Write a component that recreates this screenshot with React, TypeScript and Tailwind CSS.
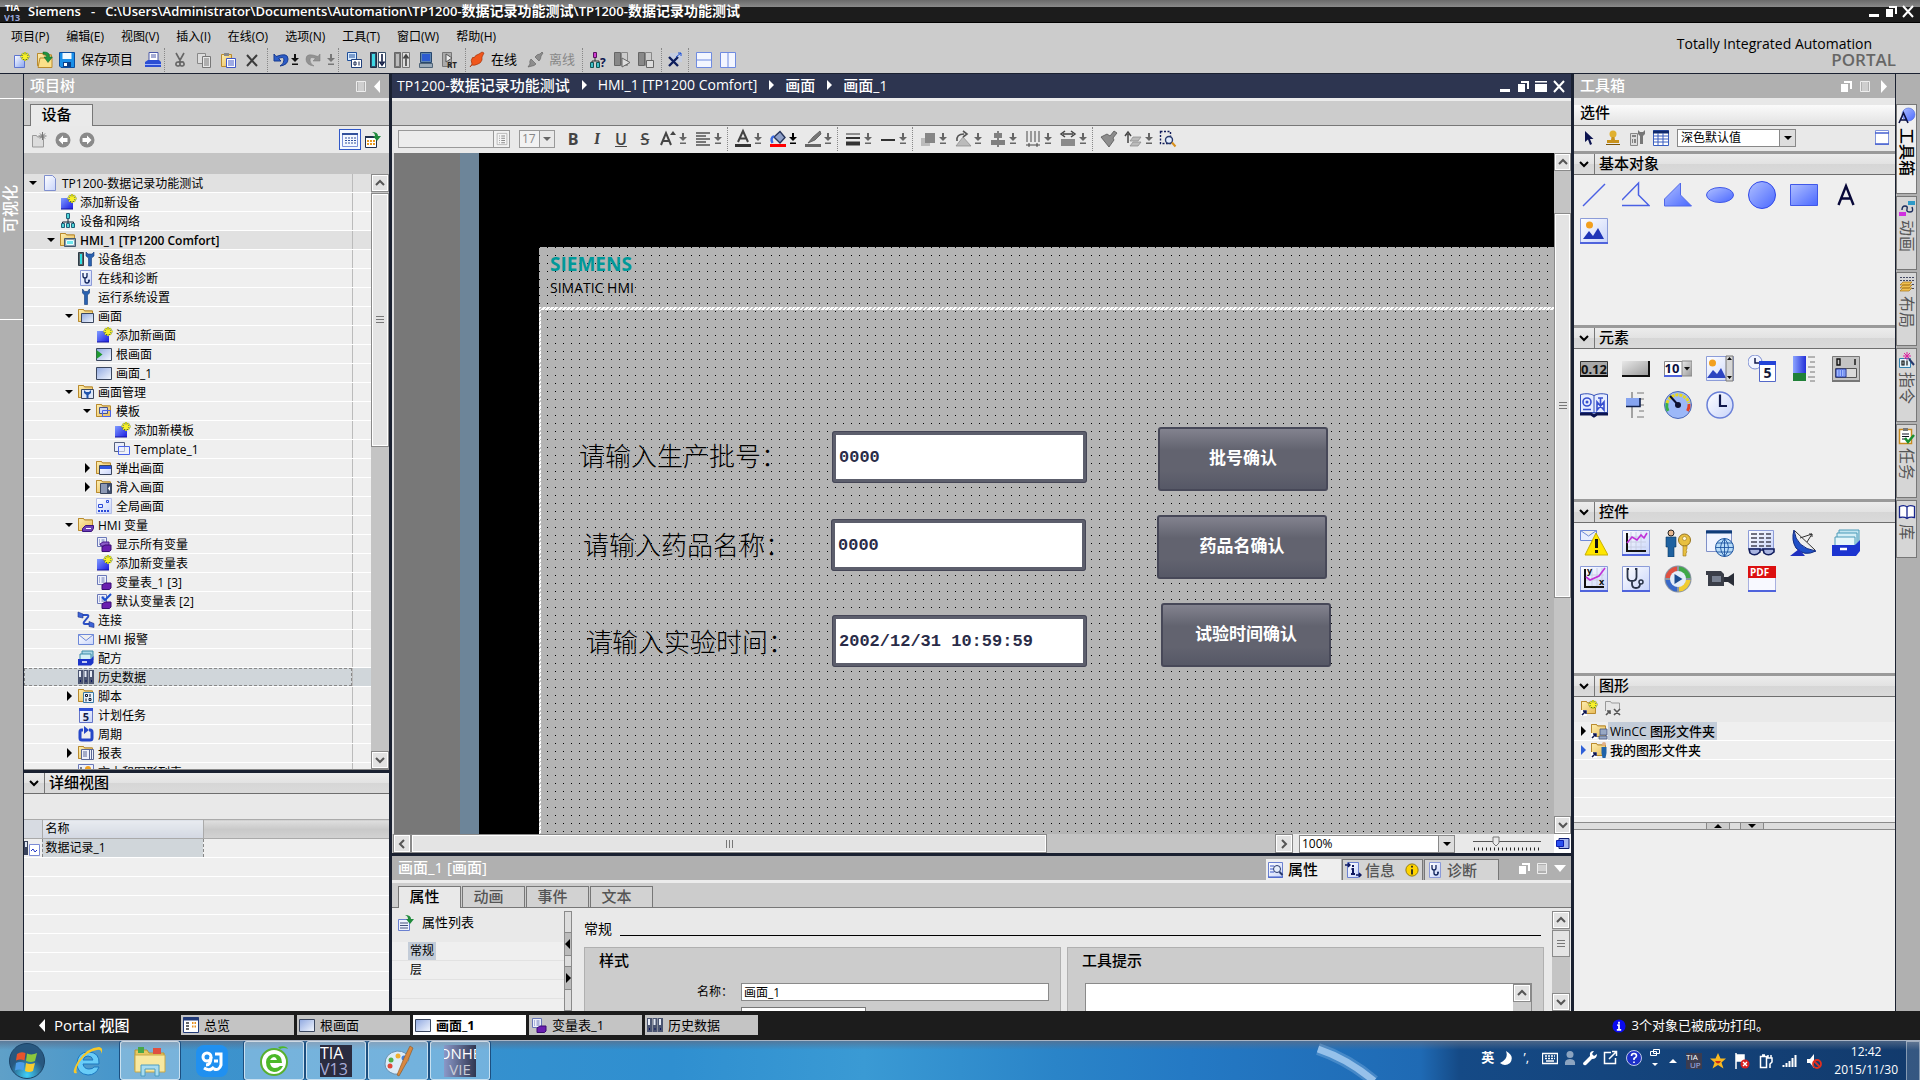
import type { ReactNode } from "react";

const folder = (
  <>
    <path d="M.5 13.500V1.500h5l1 1.500h8v4" fill="url(#gold)" stroke="#b98a2e" />
    <path d="M.5 1.500h5l1 1.500h8v10.500H.5z" fill="url(#gold)" stroke="#b98a2e" />
  </>
);

const star = (
  <>
    <path d="M12 0v9M7.500 4.500h9M9 1.500l6 6M15 1.500l-6 6" stroke="#4a6a20" strokeWidth="2.200" />
    <path d="M12 0v9M7.500 4.500h9M9 1.500l6 6M15 1.500l-6 6" stroke="#f8f02a" strokeWidth="1.400" />
  </>
);

const sheet = <path d="M1.500 1.500h9v9h-9zM3 4h1m1.500 0h3M3 6h1m1.500 0h3M3 8h1m1.500 0h3" fill="#eef1fb" stroke="#6a78b8" />;

const tag = <path d="M6 11l3-2h6v5l-1.500 1.500H6z" fill="#6a1fb0" stroke="#3b0d73" />;

const art: Record<string, ReactNode> = {
  page: <path d="M2.500.5h8l3 3v12h-11z" fill="url(#pale)" stroke="#7f8fce" />,
  add: (
    <>
      <path d="M1 4h12v11H1z" fill="url(#blue)" />
      <path d="M1 15h12" stroke="#1414a0" />
      {star}
    </>
  ),
  net: (
    <>
      <path d="M8 5v4M2.500 11V9h11v2M8 9v2" fill="none" stroke="#123" />
      <path d="M6.500.5h3v5h-3zM1.500 10.500h3v4h-3zM6.500 10.500h3v4h-3zM11.500 10.500h3v4h-3z" fill="#4fd5d8" stroke="#20607a" />
    </>
  ),
  folderHmi: (
    <>
      {folder}
      <path d="M4.500 6.500h11v8h-11z" fill="#8b9bab" stroke="#445a70" />
      <path d="M6.500 8.500h7v4h-7z" fill="#6ee6ee" stroke="#e8ffff" />
    </>
  ),
  devconf: (
    <>
      <path d="M.5 1.500h5v13h-5z" fill="#57636b" stroke="#2d3a44" />
      <path d="M2 3h2v10H2z" fill="#2ee0e0" />
      <path d="M8 1v4l2.500 2v8h3V7L16 5V1l-2 2h-4z" fill="#2a62b0" stroke="#143a78" strokeWidth=".6" />
    </>
  ),
  diag: (
    <>
      <path d="M2.500.5h11v15h-11z" fill="url(#pale)" stroke="#8b9ad8" />
      <path d="M5 3v3q0 2 2 2t2-2V3M7 8v3q0 2 2 2t2-2" fill="none" stroke="#11245c" strokeWidth="1.300" />
      <circle cx="11" cy="10.500" r="1" fill="#11245c" />
    </>
  ),
  wrench: <path d="M4.500 0v4l2 2v9.500h3V6l2-2V0l-2 2.500h-3z" fill="#2a62b0" stroke="#143a78" strokeWidth=".6" />,
  folderScreen: (
    <>
      {folder}
      <path d="M3.500 5.500h12v9h-12z" fill="url(#screen)" stroke="#3a465e" />
    </>
  ),
  rootScreen: (
    <>
      <path d="M.5 2.500h15v12H.5z" fill="url(#screen)" stroke="#3a465e" />
      <path d="M.5 4l6 4.500-6 4.500z" fill="#1f9a2f" />
    </>
  ),
  screen: <path d="M.5 2.500h15v12H.5z" fill="url(#screen)" stroke="#3a465e" />,
  folderWrench: (
    <>
      {folder}
      <path d="M3.500 5.500h12v9h-12z" fill="#dde6f7" stroke="#3a465e" />
      <path d="M6 6v3l2.500 2v3.500h2V11L13 9V6l-2 2H8z" fill="#2055ac" />
    </>
  ),
  folderTpl: (
    <>
      {folder}
      <path d="M3.500 4.500h8v6h-8z" fill="#cfd6f2" stroke="#47528a" />
      <path d="M6.500 7.500h8v6h-8z" fill="none" stroke="#4a63e8" />
    </>
  ),
  template: (
    <>
      <path d="M.5 1.500h10v9H.5z" fill="#e8ecfa" stroke="#56607e" />
      <path d="M4.500 5.500h11v8h-11z" fill="#eef2ff" fillOpacity=".6" stroke="#4a63e8" />
    </>
  ),
  folderPopup: (
    <>
      {folder}
      <path d="M3.500 5.500h12v9h-12z" fill="url(#pale)" stroke="#3a465e" />
      <path d="M4 6h11v3H4z" fill="#2f55e0" />
    </>
  ),
  folderSlide: (
    <>
      {folder}
      <path d="M4.500 4.500h11v10h-11z" fill="#8c99b5" stroke="#3a465e" />
      <path d="M11 5h4v9h-4z" fill="#3f4f6e" />
      <path d="M14 7v5l-2-2.500z" fill="#fff" />
    </>
  ),
  global: (
    <>
      <path d="M.5.5h15v15H.5z" fill="url(#pale)" stroke="#b5bfe8" />
      <path d="M2.500 6.500h4v3h-4zM10.500 2.500h2v2h-2z" fill="none" stroke="#2a49d8" />
      <path d="M2 13h2m1 0h2m1 0h2m1 0h2" stroke="#2a49d8" strokeWidth="2" />
    </>
  ),
  folderTag: (
    <>
      {folder}
      <path d="M4.500 11.500l3-3h8v3l-2 3h-9z" fill="#6c3fb5" stroke="#3b1480" />
      <path d="M8 11.500h5" stroke="#fff" />
    </>
  ),
  tagsAll: (
    <>
      {sheet}
      <path d="M4 8l3-2h6v4H5z" fill="#8b5cc8" stroke="#4a1a8a" />
      {tag}
    </>
  ),
  tagTable: (
    <>
      {sheet}
      {tag}
    </>
  ),
  tagDefault: (
    <>
      {sheet}
      {tag}
      <path d="M6 4l3 3 6-6" fill="none" stroke="#1c4fd0" strokeWidth="2" />
    </>
  ),
  link: (
    <>
      <path d="M4 3h5q2 0 1 2L6 10q-1 2 1 2h5" fill="none" stroke="#2b4fc4" strokeWidth="2" />
      <path d="M0 0l5 2v4L0 5zM16 15.500l-5-1v-5l5 2z" fill="#3c63d6" stroke="#1b2f8c" strokeWidth=".6" />
    </>
  ),
  mail: <path d="M.5 3.500h15v10H.5zL8 9.500l7.500-6" fill="url(#pale)" stroke="#6d88d8" />,
  recipe: (
    <>
      <path d="M4 1h11v9H4z" fill="#a9d8e8" stroke="#3d8ba8" />
      <path d="M2 4h11v7H2z" fill="#d5f0f6" stroke="#3d8ba8" />
      <path d="M0 9h13l2.500-3v7L13 15.500H0z" fill="#1c34c8" />
      <path d="M4 12h5" stroke="#fff" strokeWidth="1.500" />
    </>
  ),
  archive: (
    <>
      <path d="M0 1h5v14H0zM5.500 1h5v14h-5zM11 1h5v14h-5z" fill="#4a5470" />
      <path d="M1 2h2v6H1zM6.500 2h2v6h-2zM12 2h2v6h-2z" fill="#e6ebf5" />
      <path d="M2 12h1M7.500 12h1M13 12h1" stroke="#0e1860" strokeWidth="2" />
    </>
  ),
  folderScript: (
    <>
      {folder}
      <path d="M5.500 4.500h10v10h-10z" fill="#e8f2fa" stroke="#3a7aa8" />
      <path d="M7.500 6.500h2v2h-2zM12 6v3M8 10.500v3M11 10.500h2v2h-2z" fill="none" stroke="#101830" />
    </>
  ),
  task: (
    <>
      <path d="M1.500 1.500h13v14h-13z" fill="url(#pale)" stroke="#6474c8" />
      <path d="M1 1h14v3H1z" fill="#2f50d8" />
      <text x="8" y="14" fontSize="11" fontWeight="700" textAnchor="middle" fill="#141c48">5</text>
    </>
  ),
  cycle: (
    <>
      <path d="M5 4H3.500Q2 4 2 6v6q0 2 2 2h8q2 0 2-2V6q0-2-2-2h-1" fill="none" stroke="#2647c8" strokeWidth="3" />
      <path d="M6 0l5 4-5 4z" fill="#2647c8" />
    </>
  ),
  folderReport: (
    <>
      {folder}
      <path d="M3.500 4.500h12v10h-12z" fill="#eef1fb" stroke="#5a6794" />
      <path d="M5 7h4M5 9h4M5 11h4M11.500 5v9M13.500 5v9" stroke="#5a6794" />
    </>
  ),
  textlist: (
    <>
      <path d="M.5.5h15v15H.5z" fill="#eef1fb" stroke="#6a78b8" />
      <path d="M3 3v5" stroke="#111" />
      <circle cx="10" cy="5" r="3" fill="#f0a020" />
    </>
  ),
  datalog: (
    <>
      <path d="M0 1h4v14H0z" fill="#39435c" />
      <path d="M1 2h2v5H1z" fill="#dfe6f2" />
      <path d="M5.500 4.500h10v11h-10z" fill="#fff" stroke="#7b8bd4" />
      <path d="M7 11l2-2 2 3 2-2" fill="none" stroke="#2036c8" />
    </>
  ),
  newProj: (
    <>
      <path d="M1.500 3.500h10v12h-10z" fill="url(#page2)" stroke="#5d74d0" />
      {star}
    </>
  ),
  open: (
    <>
      {folder}
      <path d="M3 6h12v9.500H1z" fill="#fbe08a" stroke="#b98a2e" />
      <path d="M6 0q7-.5 6.500 5H15.500l-4.500 5.500L7 5h2.500q0-3-3.500-3z" fill="#1f9440" stroke="#0e6024" strokeWidth=".5" />
    </>
  ),
  save: (
    <>
      <path d="M.5.5h15v15H2L.5 14z" fill="#1a8fe8" stroke="#0b4ea0" />
      <path d="M3.500 1h9v6h-9z" fill="#f2faff" />
      <path d="M4 10h8v5H4z" fill="#0b3f88" />
      <path d="M5 11h3v3H5z" fill="#fff" />
    </>
  ),
  print: (
    <>
      <path d="M4 .5h9v8H4z" fill="#fff" stroke="#4a58a8" />
      <path d="M6 3h5M6 5h5" stroke="#4a58a8" />
      <path d="M0 10l3-2h11l2 2v5H0z" fill="#2c4fd4" />
      <path d="M0 12.500h16" stroke="#9db4ff" />
    </>
  ),
  cut: (
    <path d="M4 1l5 9M12 1L7 10M6.500 10a2 2 0 1 0-1 4 2 2 0 0 0 1-4M9.500 10a2 2 0 1 1 1 4 2 2 0 0 1-1-4" fill="none" stroke="#666" strokeWidth="1.600" />
  ),
  copy: (
    <>
      <path d="M1.500 1.500h8v10h-8z" fill="#ddd" stroke="#888" />
      <path d="M6.500 4.500h8v11h-8z" fill="#e8e8e8" stroke="#777" />
      <path d="M8 7h5M8 9h5M8 11h5M8 13h5" stroke="#777" />
    </>
  ),
  paste: (
    <>
      <path d="M1.500 2.500h10v12h-10z" fill="url(#gold)" stroke="#b98a2e" />
      <path d="M4 1h5v3H4z" fill="#888" />
      <path d="M6.500 6.500h9v9h-9z" fill="#fff" stroke="#3f57c8" />
      <path d="M8 9h6M8 11h6M8 13h6" stroke="#3f57c8" />
    </>
  ),
  del: <path d="M3 3l10 11M13 3L3 14" stroke="#3c3c3c" strokeWidth="2" />,
  undo: <path d="M1 2v7h7L5.500 6.500Q11 4 11 8q0 4-4 6 8-1 8-7 0-7-12-2.500z" fill="#2b5cc8" stroke="#163a90" />,
  redo: <path d="M15 2v7H8l2.500-2.500Q5 4 5 8q0 4 4 6-8-1-8-7 0-7 12-2.500z" fill="#929292" stroke="#777" strokeWidth=".5" />,
  compile: (
    <>
      <path d="M1.500.5h9v8h-9z" fill="#d9ecff" stroke="#1f4f9a" />
      <path d="M3 3h6M3 5h6" stroke="#1f4f9a" />
      <path d="M5.500 7.500h10v8h-10z" fill="#fff" stroke="#1f3f7a" />
      <path d="M8 10h2v3H8zM13 9.500v4" fill="none" stroke="#10204a" />
    </>
  ),
  download: (
    <>
      <path d="M.5.5h6v15h-6z" fill="#2f4f6a" stroke="#1c2f44" />
      <path d="M2 2h3v12H2z" fill="#3fd8e4" />
      <path d="M8.500.5h7v15h-7z" fill="#fff" stroke="#39506a" />
      <path d="M12 2v9M9.500 9.500L12 13l2.500-3.500" fill="none" stroke="#111d44" strokeWidth="1.600" />
    </>
  ),
  upload: (
    <>
      <path d="M.5.5h6v15h-6z" fill="#777" stroke="#666" />
      <path d="M2 2h3v12H2z" fill="#bbb" />
      <path d="M8.500.5h7v15h-7z" fill="#ddd" stroke="#777" />
      <path d="M12 14V4M9.500 6.500L12 3l2.500 3.500" fill="none" stroke="#444" strokeWidth="1.600" />
    </>
  ),
  pc: (
    <>
      <path d="M2.500.5h11v10h-11z" fill="#5f86b0" stroke="#27466e" />
      <path d="M4 2h8v7H4z" fill="#2d5bd0" />
      <path d="M1.500 11.500h13v4h-13z" fill="#9aa9b8" stroke="#4f6478" />
    </>
  ),
  rt: (
    <>
      <path d="M.5.5h9v14h-9z" fill="#aaa" stroke="#777" />
      <path d="M4 2l6 4-6 4z" fill="#eee" stroke="#555" />
      <text x="5" y="16" fontSize="8" fontWeight="700" fill="#222">RT</text>
    </>
  ),
  plugOn: (
    <path d="M1 15l2-3q-2-4 1-7l1 1q1-3 5-4l3-2 2 1-2 4 0 3q-1 3-4 4-4 2-6 1z" fill="#f0561c" stroke="#a83208" strokeWidth=".7" />
  ),
  plugOff: (
    <path d="M1 15l2-3q-1-3 1-5l5 5q-2 2-4 2zM8 5q2-3 5-3l2-2 1 1-2 3q0 3-2 5z" fill="#8d8d8d" stroke="#666" strokeWidth=".7" />
  ),
  netQ: (
    <>
      <path d="M5 5v4M2 11V9h7v2" fill="none" stroke="#333" />
      <path d="M3.500.5h3v5h-3z" fill="#d03bd0" stroke="#5a1260" />
      <path d="M.5 10.500h3v5h-3zM6.500 10.500h3v5h-3z" fill="#3fbfc8" stroke="#155" />
      <text x="10" y="15" fontSize="12" fontWeight="700" fill="#0e1650">?</text>
    </>
  ),
  simStart: (
    <>
      <path d="M.5.5h6v13h-6z" fill="#888" stroke="#666" />
      <path d="M7.500.5h6v13h-6z" fill="#ccc" stroke="#888" />
      <path d="M8 6l8 4.500L8 15z" fill="#ddd" stroke="#666" />
    </>
  ),
  simStop: (
    <>
      <path d="M.5.5h6v13h-6z" fill="#888" stroke="#666" />
      <path d="M7.500.5h6v13h-6z" fill="#ccc" stroke="#888" />
      <path d="M8.500 8.500h7v7h-7z" fill="#ddd" stroke="#666" />
    </>
  ),
  crossRef: (
    <>
      <path d="M3 1h12v9H3z" fill="#c5cde0" />
      <path d="M2 5l9 9M11 5l-9 9" stroke="#0e1e5c" strokeWidth="2.400" />
      <path d="M9 5l5-4M14 1h-3M14 1v3" stroke="#1c4fd0" />
    </>
  ),
  splitH: <path d="M.5.5h15v15H.5zM0 8h16" fill="#f3f6ff" stroke="#6f8be0" />,
  splitV: <path d="M.5.5h15v15H.5zM8 0v16" fill="#f3f6ff" stroke="#6f8be0" />,
  greyNew: (
    <>
      <path d="M1.500 3.500h4l1 1.500h6v10h-11z" fill="#dcdcdc" stroke="#999" />
      <path d="M11.500 0v8M7.500 4h8M9 1.500l5 5M14 1.500l-5 5" stroke="#777" />
    </>
  ),
  back: (
    <>
      <circle cx="8" cy="8" r="7.500" fill="#8a8a8a" />
      <path d="M8 3.500L3.500 8 8 12.500V10h4.500V6H8z" fill="#fff" />
    </>
  ),
  fwd: (
    <>
      <circle cx="8" cy="8" r="7.500" fill="#8a8a8a" />
      <path d="M8 3.500L12.500 8 8 12.500V10H3.500V6H8z" fill="#fff" />
    </>
  ),
  grid: (
    <>
      <path d="M.5 1.500h15v13H.5z" fill="#f4f7ff" stroke="#7a90d8" />
      <path d="M0 2h16" stroke="#31509c" strokeWidth="2" />
      <path d="M3 6h2m1 0h2m1 0h2m1 0h2M3 8.500h2m1 0h2m1 0h2m1 0h2M3 11h2m1 0h2m1 0h2m1 0h2" stroke="#31509c" />
    </>
  ),
  gridGo: (
    <>
      <path d="M.5 4.500h11v11H.5z" fill="#fff" stroke="#20304c" />
      <path d="M0 5h12" stroke="#20304c" strokeWidth="2" />
      <path d="M2 9h2m1 0h2m1 0h2M2 12h2m1 0h2m1 0h2" stroke="#e89a20" strokeWidth="2" />
      <path d="M7 0q6 0 6 4h3l-4 5-4-5h2q0-3-3-4z" fill="#1f8a3c" />
    </>
  ),
  listIcon: (
    <>
      <path d="M1.500.5h13v15h-13z" fill="#f5f5f5" stroke="#aaa" />
      <path d="M4 4h1m2 0h5M4 7h1m2 0h5M4 10h1m2 0h5M4 13h1m2 0h5" stroke="#666" />
    </>
  ),
  propGo: (
    <>
      <path d="M.5 4.500h11v11H.5z" fill="#eef2ff" stroke="#6a80d0" />
      <path d="M2 8h8M2 10.500h8M2 13h8" stroke="#44517c" />
      <path d="M7 0q6 0 6 4h3l-4 5-4-5h2q0-3-3-4z" fill="#1f8a3c" />
    </>
  ),
  fSize: (
    <>
      <path d="M1 14L6 2l5 12M3 10h6" fill="none" stroke="#444" strokeWidth="2" />
      <path d="M10 4l3-4 3 4z" fill="#444" />
    </>
  ),
  align: <path d="M1 2h14M1 5h10M1 8h14M1 11h10M1 14h14" stroke="#777" strokeWidth="2" />,
  fColor: (
    <>
      <path d="M3 11L8 0l5 11M5 7.500h6" fill="none" stroke="#444" strokeWidth="2" />
      <path d="M0 14.500h16" stroke="#333" strokeWidth="3" />
    </>
  ),
  fill: (
    <>
      <path d="M4 6l6-5.500 5 6-5 5.500z" fill="#8fa0c8" stroke="#26355c" strokeWidth="1.400" />
      <path d="M4 5q-4 2-1.500 7" fill="none" stroke="#3a6ae0" strokeWidth="2.400" />
      <path d="M0 14.500h16" stroke="#f00" strokeWidth="3" />
    </>
  ),
  pen: (
    <>
      <path d="M15 0L8 6l-5 6 7-3 6-6z" fill="#777" stroke="#555" strokeWidth=".8" />
      <path d="M0 14.500h16" stroke="#666" strokeWidth="3" />
    </>
  ),
  lineW: (
    <>
      <path d="M1 3h14" stroke="#333" />
      <path d="M1 7h14" stroke="#333" strokeWidth="2" />
      <path d="M1 12.500h14" stroke="#333" strokeWidth="4" />
    </>
  ),
  dash: <path d="M1 9h14" stroke="#333" strokeWidth="2" />,
  order: (
    <>
      <path d="M1 7h9v8H1z" fill="#bbb" />
      <path d="M5 2h10v10H5z" fill="#868686" />
    </>
  ),
  rotate: (
    <>
      <path d="M1 15h15L8 6z" fill="#bbb" stroke="#888" strokeWidth=".7" />
      <path d="M2 10q-1-7 7-7M8 0l4 3-4 3" fill="none" stroke="#555" strokeWidth="1.600" />
    </>
  ),
  alignC: (
    <>
      <path d="M8 0v16" stroke="#555" strokeWidth="1.400" />
      <path d="M4 2h8v5H4zM1 9h14v5H1z" fill="#808080" />
    </>
  ),
  distrib: (
    <>
      <path d="M2 0v11M6 0v11M10 0v11M14 0v11" stroke="#999" strokeWidth="2" />
      <path d="M1 14h14M4 12v4M12 12v4" stroke="#444" />
    </>
  ),
  sameW: (
    <>
      <path d="M3 3h10M5 0L1 3l4 3M11 0l4 3-4 3" fill="none" stroke="#444" strokeWidth="1.500" />
      <path d="M1 8h14v7H1z" fill="#8a8a8a" />
    </>
  ),
  brush: <path d="M0 6l6-3 3 2 4-5 3 2-4 5 1 2-5 7z" fill="#8d8d8d" stroke="#555" strokeWidth=".8" />,
  layer: (
    <>
      <path d="M3 12V3M0 5l3-4 3 4" fill="none" stroke="#444" strokeWidth="1.500" />
      <path d="M8 6h8l-3 4H5zM8 11h8l-3 4H5z" fill="#bbb" stroke="#888" strokeWidth=".7" />
    </>
  ),
  find: (
    <>
      <path d="M.5.5h10v12H.5z" fill="none" stroke="#111c5a" strokeWidth="1.400" strokeDasharray="2 1.500" />
      <circle cx="9" cy="9" r="3.500" fill="#e2ecfb" stroke="#27386c" strokeWidth="1.400" />
      <path d="M12 11.500l3.500 4" stroke="#d8901c" strokeWidth="2" />
    </>
  ),
  cursor: <path d="M4 1v11l3-2.500 2 5.500 2-1-2-5h3.500z" fill="#0c1450" />,
  stamp: (
    <>
      <circle cx="8" cy="4" r="3.500" fill="#e0b030" />
      <path d="M6.500 7h3l.5 3h4v3H2v-3h4z" fill="#c8921c" />
      <path d="M1 14.500h14" stroke="#7a5408" />
    </>
  ),
  devWrench: (
    <>
      <path d="M1.500 3.500h7v12h-7z" fill="#ddd" stroke="#888" />
      <path d="M3 6h4M3 10h1m1 0h2M3 12h1m1 0h2" stroke="#666" strokeWidth="1.400" />
      <path d="M9 0v4l2 2v8h3V6l2-2V0l-2 2h-3z" fill="#777" />
    </>
  ),
  tableIcon: (
    <>
      <path d="M.5.5h15v15H.5z" fill="#fff" stroke="#3a5fc0" />
      <path d="M0 2h16" stroke="#102a6c" strokeWidth="3" />
      <path d="M5 3v13M10 3v13M1 6h14M1 9h14M1 12h14" stroke="#3a5fc0" />
    </>
  ),
  win: (
    <>
      <path d="M1.500.5h13v14h-13z" fill="#fff" stroke="#8194dc" />
      <path d="M1 3h14M1 14h14" stroke="#4560d0" strokeWidth="1.500" />
    </>
  ),
  props: (
    <>
      <path d="M.5.5h14v15H.5z" fill="url(#pale)" stroke="#6a80d0" />
      <path d="M2 4h4M2 7h3M2 10h4M0 15h15" stroke="#3a58c8" />
      <circle cx="9" cy="7" r="3.500" fill="#e6eefc" stroke="#27386c" />
      <path d="M11.500 10l3 3" stroke="#27386c" strokeWidth="2" />
    </>
  ),
  infoDoc: (
    <>
      <path d="M2.500.5h11v15h-11z" fill="url(#pale)" stroke="#6a80d0" />
      <path d="M0 3h5M3 1l2 2-2 2M11 13h5M14 11l2 2-2 2" fill="none" stroke="#0e1860" strokeWidth="1.400" />
      <path d="M8 3v2M6.500 7H8v5M6 12h4" fill="none" stroke="#0e1860" strokeWidth="2" />
    </>
  ),
  infoY: (
    <>
      <circle cx="8" cy="8" r="7" fill="#ffd400" stroke="#8a7200" />
      <path d="M8 3v2M8 7v6" stroke="#222" strokeWidth="2" />
    </>
  ),
  infoB: (
    <>
      <circle cx="8" cy="8" r="7.500" fill="#0a0af0" />
      <path d="M8 3v2.500M6 7h2v5M5.500 12.500h5" fill="none" stroke="#fff" strokeWidth="2" />
    </>
  ),
  overview: (
    <>
      <path d="M.5.5h15v15H.5z" fill="#fff" stroke="#223b78" />
      <path d="M0 2h16" stroke="#223b78" strokeWidth="3" />
      <path d="M3 6h3M3 9h3M3 12h3" stroke="#333" strokeWidth="1.500" />
      <path d="M9 6h1.500m1 0H13M9 9.500h1.500m1 0H13" stroke="#e8901c" strokeWidth="2" />
    </>
  ),
  gfxNew: (
    <>
      {folder}
      {star}
      <path d="M0 16v-6h6v6z" fill="#fff" />
      <path d="M1 15l4-4M2 11h3v3" fill="none" stroke="#0c1450" strokeWidth="1.500" />
    </>
  ),
  gfxDel: (
    <>
      <path d="M.5 11V1.500h5l1 1.500h8V9" fill="#e6e6e6" stroke="#999" />
      <path d="M1 15l4-4M2 11h3v3M9 9l6 6M15 9l-6 6" fill="none" stroke="#555" strokeWidth="1.600" />
    </>
  ),
  gfxPc: (
    <>
      {folder}
      <path d="M9 6h7v6H9zM8 13h8v3H8z" fill="#98a8c4" stroke="#445684" strokeWidth=".8" />
      <path d="M0 10h6v6H0z" fill="#fff" />
      <path d="M1 15l4-4M2 11h3v3" fill="none" stroke="#0c1450" strokeWidth="1.500" />
    </>
  ),
  gfxMan: (
    <>
      {folder}
      <circle cx="13" cy="2" r="2" fill="#e0b088" />
      <path d="M10.500 5h5v6l-1 5h-3l-1-5z" fill="#1f62a8" />
      <path d="M0 10h6v6H0z" fill="#fff" />
      <path d="M1 15l4-4M2 11h3v3" fill="none" stroke="#0c1450" strokeWidth="1.500" />
    </>
  ),
  tabTools: (
    <>
      <circle cx="9.500" cy="6.500" r="6.500" fill="url(#shape)" stroke="#4a68d8" strokeWidth=".6" />
      <path d="M0 15L4.500 5 9 15M2 12h5" fill="none" stroke="#0c1040" strokeWidth="1.600" />
    </>
  ),
  tabAnim: (
    <>
      <path d="M9 1h7v4H9z" fill="#2f9ac8" />
      <path d="M0 12h7v4H0z" fill="#d030e0" />
      <path d="M3 10q0-4 3-4t2 3 3 3 2-5" fill="none" stroke="#1c2c5c" strokeWidth="1.400" />
    </>
  ),
  tabLayout: (
    <>
      <path d="M2 1v1m3-1v1m3-1v1m3-1v1m3-1v1M2 4v1m3-1v1m3-1v1m3-1v1m3-1v1M14 8v1m0 3v1" stroke="#10183c" strokeWidth="1.500" />
      <path d="M4 6h9l-3 3H1zM4 9h9l-3 3H1zM4 12h9l-3 3H1z" fill="#f0c050" stroke="#a87414" strokeWidth=".7" />
    </>
  ),
  tabInstr: (
    <>
      <path d="M.5 6.500h11v9H.5z" fill="#e3f2fb" stroke="#3080b0" />
      <path d="M3 9h2v4H3zM8 8.500v5" fill="none" stroke="#111" strokeWidth="1.200" />
      <path d="M8 0v8M4 4h8M5 1l6 6M11 1L5 7" stroke="#e020a0" />
      <path d="M10 7l5 6" stroke="#28386c" strokeWidth="2" />
    </>
  ),
  tabTask: (
    <>
      <path d="M.5 1.500h12v14H.5z" fill="#fff" stroke="#c88a20" strokeWidth="1.500" />
      <path d="M4 0h5v3H4z" fill="#777" />
      <path d="M3 6h7M3 8.500h7M3 11h5" stroke="#112" />
      <path d="M6 10l3 4 6-7" fill="none" stroke="#189030" strokeWidth="2.500" />
    </>
  ),
  tabLib: <path d="M.5 2.500q5-2 7.500.5 2.500-2.500 7.500-.5v11q-5-1-7.500 1-2.500-2-7.500-1zM8 3v11" fill="#fff" stroke="#18268c" strokeWidth="1.300" />,
};

// palette drawings, 28 units square
const white28 = <path d="M.5 1.500h27v24H.5z" fill="url(#pale)" stroke="#8c9cd8" />;
const base28 = <path d="M0 26h28" stroke="#4f63dc" strokeWidth="2" />;

const big: Record<string, ReactNode> = {
  line: <path d="M3 25L25 3" stroke="#4a60e4" strokeWidth="1.500" />,
  polyline: <path d="M0 19L16.500 2v12L27 24.500H0" fill="none" stroke="#4a60e4" strokeWidth="1.500" />,
  polygon: <path d="M.5 25v-7L16.500 2v12L27.500 25z" fill="url(#shape)" stroke="#5068e8" />,
  ellipse: <ellipse cx="14" cy="14" rx="13.500" ry="7.500" fill="url(#shape)" stroke="#4058e8" />,
  circle: <circle cx="14" cy="14" r="13.500" fill="url(#shape)" stroke="#3048e8" />,
  rect: <path d="M.5 3.500h27v21H.5z" fill="url(#shape)" stroke="#4058e8" />,
  text: <path d="M6.500 24L14 5l7.500 19M9 17.500h10" fill="none" stroke="#080838" strokeWidth="2.400" />,
  image: (
    <>
      {white28}
      <circle cx="9.500" cy="8" r="3.500" fill="#f2a020" />
      <path d="M3 22l6-8 4 5 5-8 6 11z" fill="#2036b8" />
      {base28}
    </>
  ),
  io: (
    <>
      <path d="M.5 6.500h27v14H.5z" fill="#a8a8a8" stroke="#333" />
      <text x="14" y="19" fontSize="13" fontWeight="700" textAnchor="middle" fill="#111">0.12</text>
      <path d="M0 21h28" stroke="#111" strokeWidth="2" />
    </>
  ),
  button: (
    <>
      <path d="M0 6h27v15H0z" fill="url(#metal)" />
      <path d="M0 21h27V6" fill="none" stroke="#111" strokeWidth="2" />
    </>
  ),
  symbolIo: (
    <>
      <path d="M.5 6.500h27v14H.5z" fill="#fff" stroke="#888" />
      <path d="M18 6h10v15H18z" fill="url(#metal)" stroke="#888" />
      <text x="8" y="18" fontSize="13" fontWeight="700" textAnchor="middle" fill="#0c1040">10</text>
      <path d="M20 12h6l-3 3.500z" fill="#111" />
      <path d="M0 21h18" stroke="#4f63dc" strokeWidth="2" />
    </>
  ),
  graphicIo: (
    <>
      {white28}
      <circle cx="6.500" cy="8" r="3.500" fill="#f2a020" />
      <path d="M1 23l6-8 4 4 4-6 5 10z" fill="#2c44c0" />
      <path d="M20 1h7v25h-7z" fill="#d6d6d6" stroke="#777" />
      <path d="M21 5h5l-2.500-3zM21 21h5l-2.500 3z" fill="#111" />
    </>
  ),
  dateTime: (
    <>
      <circle cx="7" cy="7" r="7" fill="#f0f4ff" stroke="#7a8cd0" />
      <path d="M7 3v5h4" fill="none" stroke="#10184c" strokeWidth="1.500" />
      <path d="M11.500 6.500h16v20h-16z" fill="#fff" stroke="#5468c8" />
      <path d="M11 8h17" stroke="#2444d8" strokeWidth="4" />
      <text x="19.500" y="23" fontSize="14" fontWeight="700" textAnchor="middle" fill="#141838">5</text>
    </>
  ),
  bar: (
    <>
      <path d="M3 1h13v18H3z" fill="url(#barBlue)" />
      <path d="M3 18h13v8H3z" fill="#208038" />
      <path d="M18 2h7M20 7h5M18 12h7M20 17h5M18 22h7M20 26h5" stroke="#777" />
    </>
  ),
  toggle: (
    <>
      <path d="M.5 1.500h27v24H.5z" fill="#c4c4c4" stroke="#777" />
      <path d="M0 26h28V2" fill="none" stroke="#777" strokeWidth="2" />
      <path d="M5 4h3v6H5zM23 4v6" fill="none" stroke="#111" strokeWidth="1.400" />
      <path d="M3.500 13.500h21v9h-21z" fill="#dadada" stroke="#555" />
      <path d="M4 14h10v8H4z" fill="#a0b8ff" stroke="#1c2c8c" />
      <path d="M7 14v8M9.500 14v8M12 14v8" stroke="#5878e8" />
    </>
  ),
  library: (
    <>
      <path d="M.5 3.500q8-2 13.500 1 5.500-3 13.500-1v18H.5zM14 4v19" fill="#e6edff" stroke="#3450b8" />
      <path d="M0 23h11l3 2 3-2h11" fill="none" stroke="#0c1450" strokeWidth="3" />
      <circle cx="7" cy="11" r="4" fill="none" stroke="#3850d0" strokeWidth="1.600" />
      <circle cx="7" cy="11" r="1.500" fill="#3850d0" />
      <path d="M3 18.500h8M17 11v8l7-8v8zM20.500 7v7M18 7h5" fill="none" stroke="#3850d0" strokeWidth="1.600" />
    </>
  ),
  slider: (
    <>
      <path d="M10 1v26" stroke="#888" strokeWidth="1.500" />
      <path d="M15 2h7M17 8h5M15 14h7M17 20h5M15 26h7" stroke="#777" />
      <path d="M4 7h14v8H4z" fill="#86a4f0" />
      <path d="M4 15.500h14V7" fill="none" stroke="#10204c" strokeWidth="1.600" />
    </>
  ),
  gauge: (
    <>
      <circle cx="14" cy="14" r="13.500" fill="#9cb8f8" stroke="#4a68b8" />
      <path d="M4 20A11.500 11.500 0 0 1 3 12" fill="none" stroke="#38b048" strokeWidth="3" />
      <path d="M3 12A11.500 11.500 0 0 1 25 12" fill="none" stroke="#e8d820" strokeWidth="3" strokeDasharray="3 1" />
      <path d="M25 13A11.500 11.500 0 0 1 23.500 20" fill="none" stroke="#e04028" strokeWidth="3" />
      <path d="M6 5l9 10" stroke="#0c1030" strokeWidth="2" />
      <circle cx="14" cy="14" r="3" fill="#0c1030" />
    </>
  ),
  clock: (
    <>
      <circle cx="14" cy="14" r="13" fill="url(#pale)" stroke="#6a80d8" strokeWidth="1.500" />
      <path d="M14 3.500V15h7" fill="none" stroke="#10184c" strokeWidth="2.200" />
    </>
  ),
  alarm: (
    <>
      <path d="M.5 1.500h16v10H.5zL8.500 7l8-5.500" fill="#e8eeff" stroke="#6d88d8" />
      <path d="M16 4l12 22H5z" fill="#ffe600" stroke="#c8b000" />
      <path d="M16.500 10v9M16.500 21v3" stroke="#111" strokeWidth="3" />
    </>
  ),
  trend: (
    <>
      {white28}
      <path d="M9 3v18M14 3v18M19 3v18M5 8h19M5 13h19M5 18h19" stroke="#c8cee4" />
      <path d="M5 4v18h19" fill="none" stroke="#111" strokeWidth="2" />
      <path d="M5 14l5-6 5 3 4-5 3 3 3-5" fill="none" stroke="#c030d8" strokeWidth="1.600" />
      {base28}
    </>
  ),
  user: (
    <>
      <circle cx="7" cy="4" r="3" fill="#e8b890" stroke="#222" />
      <path d="M2 8h10v10h-2v10H4V18H2z" fill="#1f62a0" stroke="#0c3860" strokeWidth=".6" />
      <circle cx="20.500" cy="11" r="6" fill="#e8c040" stroke="#98741c" />
      <circle cx="20.500" cy="9.500" r="2" fill="#fff8d8" stroke="#98741c" strokeWidth=".6" />
      <path d="M19 17h4v3l-1 1 1 2-1 1v3h-3z" fill="#e8c040" stroke="#98741c" strokeWidth=".6" />
    </>
  ),
  web: (
    <>
      <path d="M.5 1.500h25v21H.5z" fill="#f0f4ff" stroke="#7f90c8" />
      <path d="M0 3h26" stroke="#0f3c78" strokeWidth="3" />
      <circle cx="18.500" cy="18.500" r="9" fill="#b8dcf8" stroke="#1c54a0" />
      <path d="M9.500 18.500h18M18.500 9.500v18M11 14h15M11 23h15M18.500 9.500q-8 9 0 18M18.500 9.500q8 9 0 18" fill="none" stroke="#1c54a0" strokeWidth=".9" />
    </>
  ),
  recipeView: (
    <>
      <path d="M.5 1.500h25v18H.5z" fill="url(#pale)" stroke="#8c9cd8" />
      <path d="M3 5h6m2 0h5m2 0h5M3 9h6m2 0h5m2 0h5M3 13h6m2 0h5m2 0h5M3 17h6m2 0h5m2 0h5" stroke="#445" strokeWidth="1.400" />
      <path d="M1 20h11v3q-5 5-10 1zM15 20h11v3q-5 5-10 1zM12 21h3" fill="#a8b4e0" stroke="#101c5c" strokeWidth="1.600" />
    </>
  ),
  dish: (
    <>
      <path d="M4 1q2 18 22 21-12 6-20-3Q1 11 4 1z" fill="#2050c8" stroke="#102a80" />
      <path d="M5 2L25 21M10 9L22 5l-5 8M22 5l-3 0M22 5l0 3" fill="none" stroke="#333" />
      <path d="M9 20l6 7H0z" fill="#2030c0" />
    </>
  ),
  cabinet: (
    <>
      <path d="M7 1h20v14H7z" fill="#c0e4f0" stroke="#4a9ab8" />
      <path d="M5 4h20v12H5z" fill="#d4eef6" stroke="#4a9ab8" />
      <path d="M3 8h20v10H3z" fill="#e6f6fa" stroke="#4a9ab8" />
      <path d="M0 16h23l5-5v11l-4 5H0z" fill="#1c34d0" />
      <path d="M8 20h7" stroke="#fff" strokeWidth="2.500" />
    </>
  ),
  xyTrend: (
    <>
      {white28}
      <path d="M12 3v18M17 3v18M22 3v18M5 10h19M5 15h19" stroke="#c8cee4" />
      <path d="M5 4v18h19" fill="none" stroke="#111" strokeWidth="2" />
      <path d="M6 12l4 3 9-4 6-8" fill="none" stroke="#c030d8" strokeWidth="1.600" />
      <text x="7" y="9" fontSize="9" fontWeight="700" fill="#111">y</text>
      <text x="19" y="20" fontSize="9" fontWeight="700" fill="#111">x</text>
      {base28}
    </>
  ),
  sysDiag: (
    <>
      {white28}
      <path d="M7 4H5.500v8q0 4 4.500 4t4.500-4V4H13M10 16v3q0 4 4 4t4-4" fill="none" stroke="#2a3448" strokeWidth="1.800" />
      <circle cx="19" cy="17" r="2" fill="none" stroke="#2a3448" strokeWidth="1.500" />
      {base28}
    </>
  ),
  media: (
    <>
      <circle cx="14" cy="14" r="13.500" fill="#8a94a4" />
      <path d="M1.500 13A12.500 12.500 0 0 1 13 1.500v5A7.500 7.500 0 0 0 6.500 13z" fill="#e05040" />
      <path d="M15 1.500A12.500 12.500 0 0 1 26.500 13h-5A7.500 7.500 0 0 0 15 6.500z" fill="#40a848" />
      <path d="M26.500 15A12.500 12.500 0 0 1 15 26.500v-5A7.500 7.500 0 0 0 21.500 15z" fill="#f0cc30" />
      <path d="M13 26.500A12.500 12.500 0 0 1 1.500 15h5a7.500 7.500 0 0 0 6.500 6.500z" fill="#3868c8" />
      <circle cx="14" cy="14" r="8" fill="#e4ecf8" />
      <path d="M10.500 9v10l8-5z" fill="#1c4c90" />
    </>
  ),
  camera: (
    <>
      <path d="M0 6h15l3 3v12H2V10H0z" fill="#3a3e48" />
      <path d="M6 11h9v6H6z" fill="#788090" />
      <path d="M18 12h4l6-4v13l-6-4h-4z" fill="#2a2e38" />
    </>
  ),
  pdf: (
    <>
      <path d="M.5 1.500h27v24H.5z" fill="#f8f9ff" stroke="#a8b0e0" />
      <path d="M0 1h28v12H0z" fill="#dc1010" />
      <text x="2" y="11" fontSize="10" fontWeight="700" fill="#fff">PDF</text>
      {base28}
    </>
  ),
};

function Icon({ name, className = "size-4" }: { name: string; className?: string }) {
  return (
    <svg viewBox="0 0 16 16" className={`${className} shrink-0 overflow-visible`} aria-hidden="true">
      {art[name]}
    </svg>
  );
}

function Tool({ name, label, w = "w-6" }: { name: string; label: string; w?: string }) {
  return (
    <button aria-label={label} className={`flex h-5 shrink-0 items-center justify-center ${w}`}>
      <Icon name={name} />
    </button>
  );
}

function Drop({ color = "#666" }: { color?: string }) {
  return (
    <svg viewBox="0 0 8 12" className="h-3 w-2 shrink-0" aria-hidden="true">
      <path d="M4 0v5" stroke={color} strokeWidth="2" />
      <path d="M0 4h8L4 8zM1 9.500h6V11H1z" fill={color} />
    </svg>
  );
}

function Sep({ className = "mx-[3px]" }: { className?: string }) {
  return <span className={`h-6 w-px shrink-0 border-l border-dotted border-[#888] ${className}`} />;
}

function Tri({ dir = "right", className = "fill-black" }: { dir?: string; className?: string }) {
  const d: Record<string, string> = {
    right: "M3 0l5 5-5 5z",
    left: "M7 0L2 5l5 5z",
    down: "M1 3h8L5 7z",
    up: "M1 7h8L5 3z",
  };
  return (
    <svg viewBox="0 0 10 10" className={`size-2.5 shrink-0 ${className}`} aria-hidden="true">
      <path d={d[dir]} />
    </svg>
  );
}

function Chevron({ dir = "down", className = "stroke-black" }: { dir?: string; className?: string }) {
  const d: Record<string, string> = {
    down: "M1 3l4 4 4-4",
    up: "M1 7l4-4 4 4",
    left: "M7 1L3 5l4 4",
    right: "M3 1l4 4-4 4",
  };
  return (
    <svg viewBox="0 0 10 10" className={`size-2.5 fill-none stroke-2 ${className}`} aria-hidden="true">
      <path d={d[dir]} />
    </svg>
  );
}

function ScrollButton({ dir, className = "h-[18px] w-full" }: { dir: string; className?: string }) {
  return (
    <button
      aria-label={`scroll ${dir}`}
      className={`flex shrink-0 items-center justify-center border border-[#8a8a8a] bg-[#e2e2e2] outline outline-1 -outline-offset-2 outline-white ${className}`}
    >
      <Chevron dir={dir} className="stroke-[#555]" />
    </button>
  );
}

function Grip({ vertical = false }: { vertical?: boolean }) {
  return (
    <svg viewBox="0 0 8 8" className={`size-2 ${vertical ? "rotate-90" : ""}`} aria-hidden="true">
      <path d="M0 .5h8M0 3.500h8M0 6.500h8" stroke="#777" />
    </svg>
  );
}

function WinGlyph({ kind }: { kind: string }) {
  const g: Record<string, ReactNode> = {
    min: <path d="M1 9h10v3H1z" fill="#fff" />,
    restore: <path d="M4 1h8v8h-2V3H4zM1 4h7v8H1z" fill="#fff" />,
    max: <path d="M0 1h12v1.500H0zM0 4h12v8H0z" fill="#fff" />,
    close: <path d="M1 1l10 11M11 1L1 12" stroke="#fff" strokeWidth="2" />,
    columns: <path d="M1.500 1.500h9v10h-9zM4 1v11M6 1v11M8 1v11" fill="none" stroke="#eee" />,
    rows: <path d="M1.500 1.500h9v10h-9zM1 4h10M1 6h10M1 8h10" fill="none" stroke="#eee" />,
    left: <path d="M9 0v13L3 6.500z" fill="#fff" />,
    right: <path d="M3 0v13l6-6.500z" fill="#fff" />,
    down: <path d="M0 3h12L6 10z" fill="#fff" />,
  };
  return (
    <button aria-label={kind} className="flex size-4 items-center justify-center">
      <svg viewBox="0 0 12 13" className="h-[13px] w-3">{g[kind]}</svg>
    </button>
  );
}

const menus = ["项目(P)", "编辑(E)", "视图(V)", "插入(I)", "在线(O)", "选项(N)", "工具(T)", "窗口(W)", "帮助(H)"];

function Header() {
  return (
    <header className="shrink-0">
      <div className="flex h-[23px] items-center border-b border-black bg-[linear-gradient(#6a6a6a,#8a8a8a_7px,#1c1c1c_7px)] pl-1 text-white">
        <svg viewBox="0 0 18 20" className="mt-px mr-1.5 h-5 w-[18px] shrink-0" role="img" aria-label="TIA V13">
          <text x="1" y="9" fontSize="9" fontWeight="700" fill="#fff">TIA</text>
          <text x="0" y="19" fontSize="9" fontWeight="700" fill="#9aa6dc">V13</text>
        </svg>
        <h1 className="text-[13px] leading-[22px] font-semibold whitespace-pre">
          Siemens{"   -   "}C:\Users\Administrator\Documents\Automation\TP1200-
          <span className="text-sm leading-[22px]">数据记录功能测试</span>\TP1200-
          <span className="text-sm leading-[22px]">数据记录功能测试</span>
        </h1>
        <div className="ml-auto flex items-center gap-px pr-1">
          <WinGlyph kind="min" />
          <WinGlyph kind="restore" />
          <WinGlyph kind="close" />
        </div>
      </div>
      <div className="flex h-[51px] justify-between border-b border-[#1a2131] bg-[#ccc]">
        <div>
          <nav className="flex h-7 items-center gap-[17px] pl-[11px] text-xs">
            {menus.map((m) => (
              <button key={m} className="whitespace-nowrap">{m}</button>
            ))}
          </nav>
          <div className="flex h-[18px] items-center pl-[9px] text-[13px]">
            <Tool name="newProj" label="新建" />
            <Tool name="open" label="打开" />
            <Tool name="save" label="保存" w="w-5" />
            <button className="mr-3 ml-1 whitespace-nowrap">保存项目</button>
            <Tool name="print" label="打印" w="w-4" />
            <Sep />
            <Tool name="cut" label="剪切" />
            <Tool name="copy" label="复制" />
            <Tool name="paste" label="粘贴" />
            <Tool name="del" label="删除" />
            <Sep />
            <Tool name="undo" label="撤消" w="w-5" />
            <Drop color="#111" />
            <Tool name="redo" label="恢复" w="w-7" />
            <Drop color="#777" />
            <Sep />
            <Tool name="compile" label="编译" />
            <Tool name="download" label="下载" />
            <Tool name="upload" label="上传" />
            <Tool name="pc" label="仿真" />
            <Tool name="rt" label="运行系统" />
            <Sep />
            <button className="flex items-center gap-1.5"><Icon name="plugOn" />在线</button>
            <button className="mr-1 ml-2.5 flex items-center gap-1.5 text-[#888]"><Icon name="plugOff" />离线</button>
            <Sep />
            <Tool name="netQ" label="可访问的设备" />
            <Tool name="simStart" label="启动" />
            <Tool name="simStop" label="停止" />
            <Sep />
            <Tool name="crossRef" label="交叉引用" w="w-5" />
            <Sep />
            <Tool name="splitH" label="水平拆分" />
            <Tool name="splitV" label="垂直拆分" />
          </div>
        </div>
        <div className="pt-3 pr-6 text-right">
          <p className="pr-6 text-sm leading-[18px] font-medium">Totally Integrated Automation</p>
          <p className="text-[17px] leading-[14px] font-semibold text-[#666]">PORTAL</p>
        </div>
      </div>
    </header>
  );
}

type Row = { lv: number; icon: string; text: string; arrow?: string; look?: string };

const rows: Row[] = [
  { lv: 0, icon: "page", text: "TP1200-数据记录功能测试", arrow: "down", look: "head" },
  { lv: 1, icon: "add", text: "添加新设备" },
  { lv: 1, icon: "net", text: "设备和网络" },
  { lv: 1, icon: "folderHmi", text: "HMI_1 [TP1200 Comfort]", arrow: "down", look: "bold" },
  { lv: 2, icon: "devconf", text: "设备组态" },
  { lv: 2, icon: "diag", text: "在线和诊断" },
  { lv: 2, icon: "wrench", text: "运行系统设置" },
  { lv: 2, icon: "folderScreen", text: "画面", arrow: "down" },
  { lv: 3, icon: "add", text: "添加新画面" },
  { lv: 3, icon: "rootScreen", text: "根画面" },
  { lv: 3, icon: "screen", text: "画面_1" },
  { lv: 2, icon: "folderWrench", text: "画面管理", arrow: "down" },
  { lv: 3, icon: "folderTpl", text: "模板", arrow: "down" },
  { lv: 4, icon: "add", text: "添加新模板" },
  { lv: 4, icon: "template", text: "Template_1" },
  { lv: 3, icon: "folderPopup", text: "弹出画面", arrow: "right" },
  { lv: 3, icon: "folderSlide", text: "滑入画面", arrow: "right" },
  { lv: 3, icon: "global", text: "全局画面" },
  { lv: 2, icon: "folderTag", text: "HMI 变量", arrow: "down" },
  { lv: 3, icon: "tagsAll", text: "显示所有变量" },
  { lv: 3, icon: "add", text: "添加新变量表" },
  { lv: 3, icon: "tagTable", text: "变量表_1 [3]" },
  { lv: 3, icon: "tagDefault", text: "默认变量表 [2]" },
  { lv: 2, icon: "link", text: "连接" },
  { lv: 2, icon: "mail", text: "HMI 报警" },
  { lv: 2, icon: "recipe", text: "配方" },
  { lv: 2, icon: "archive", text: "历史数据", look: "selected" },
  { lv: 2, icon: "folderScript", text: "脚本", arrow: "right" },
  { lv: 2, icon: "task", text: "计划任务" },
  { lv: 2, icon: "cycle", text: "周期" },
  { lv: 2, icon: "folderReport", text: "报表", arrow: "right" },
  { lv: 2, icon: "textlist", text: "文本和图形列表" },
];

const indent = ["pl-0", "pl-[18px]", "pl-9", "pl-[54px]", "pl-[72px]"];
const rowLook: Record<string, string> = {
  head: "bg-[#e1e1e1]",
  bold: "bg-[#e1e1e1] font-semibold",
  selected: "bg-[#d0d6da] outline-1 -outline-offset-1 outline-dashed outline-[#888]",
};

function SectionHead({ title }: { title: string }) {
  return (
    <div className="flex h-[21px] shrink-0 items-stretch border-b border-[#6e6e6e] bg-[linear-gradient(#ececec,#e2e2e2_50%,#d6d6d6_50%,#dadada)]">
      <button aria-label={title} className="flex w-[21px] items-center justify-center border-r border-[#777]">
        <Chevron />
      </button>
      <h2 className="pl-1 text-[15px] leading-[18px] font-medium">{title}</h2>
    </div>
  );
}

function ProjectTree() {
  return (
    <aside className="flex w-[365px] shrink-0 flex-col bg-[#efefef]">
      <div className="flex h-6 shrink-0 items-center bg-[#b0b0b0] pr-1 pl-1.5 text-white">
        <h2 className="mr-auto pb-0.5 text-[15px] font-medium">项目树</h2>
        <WinGlyph kind="columns" />
        <WinGlyph kind="left" />
      </div>
      <div className="flex h-7 shrink-0 items-end border-t-[3px] border-b border-t-[#ececec] border-b-[#777] bg-[#ccc] pl-1.5">
        <button className="-mb-px h-[22px] w-[63px] border border-b-0 border-[#777] bg-[#eaeaea] pr-2.5 pb-1 text-[15px] leading-[18px] font-medium">设备</button>
      </div>
      <div className="flex h-[27px] shrink-0 items-center bg-[#e9e9e9] pr-1 pl-[3px]">
        <Tool name="greyNew" label="新建" />
        <Tool name="back" label="后退" />
        <Tool name="fwd" label="前进" />
        <button aria-label="网格" className="ml-auto flex h-[21px] w-[22px] items-center justify-center border border-[#3058c8] bg-[#f6f9ff]">
          <Icon name="grid" />
        </button>
        <Tool name="gridGo" label="转到" />
      </div>
      <div className="h-[21px] shrink-0 bg-[#c4c4c4]" />
      <div className="flex h-[596px] shrink-0 border-b border-[#8a8a8a] text-xs">
        <ul className="min-w-0 flex-1 overflow-hidden" role="tree">
          {rows.map((r, i) => (
            <li key={i} role="treeitem" className="flex h-[19px] border-b border-white">
              <div className={`flex flex-1 items-center ${indent[r.lv]} ${rowLook[r.look ?? ""] ?? ""}`}>
                <span className="flex w-[18px] justify-center">{r.arrow && <Tri dir={r.arrow} />}</span>
                <Icon name={r.icon} />
                <span className="ml-1 pt-0.5 leading-4 whitespace-nowrap">{r.text}</span>
              </div>
              <div
                className={`w-[19px] border-l border-[#bbb] ${
                  r.look === "selected" ? "bg-[#d0d6da]" : r.look ? "bg-[#e1e1e1]" : ""
                }`}
              />
            </li>
          ))}
        </ul>
        <div className="flex w-[18px] flex-col bg-[#c4c4c4]">
          <ScrollButton dir="up" />
          <div className="mt-px flex h-[254px] items-center justify-center border border-[#8a8a8a] bg-[#e4e4e4] outline outline-1 -outline-offset-2 outline-white">
            <Grip />
          </div>
          <ScrollButton dir="down" className="mt-auto h-[18px] w-full" />
        </div>
      </div>
      <section className="flex min-h-0 flex-1 flex-col border-t-[3px] border-[#1a2131]">
        <SectionHead title="详细视图" />
        <div className="h-[25px] shrink-0 bg-[#e9e9e9]" />
        <table className="w-full table-fixed border-collapse text-xs">
          <thead>
            <tr className="h-[19px] border-t border-b border-[#aaa] bg-[linear-gradient(#dedede,#c9c9c9_50%,#d2d2d2)] text-left">
              <th className="w-[18px] border-r border-[#aaa] bg-[#d7dbe2] p-0" />
              <th className="w-[161px] border-r border-[#aaa] bg-[linear-gradient(#e8ebf0,#d3d8e2)] p-0 pl-[3px] leading-[18px] font-normal">名称</th>
              <th className="p-0" />
            </tr>
          </thead>
          <tbody>
            <tr className="h-[19px] border-b border-white">
              <td className="p-0"><Icon name="datalog" /></td>
              <td className="border border-dashed border-[#888] bg-[#d0d6da] p-0 pl-[3px] leading-4">数据记录_1</td>
              <td className="p-0" />
            </tr>
            {Array.from({ length: 7 }, (_, i) => (
              <tr key={i} className="h-[19px] border-b border-white"><td colSpan={3} className="p-0" /></tr>
            ))}
          </tbody>
        </table>
      </section>
    </aside>
  );
}

function FormatBar() {
  const pair = "flex w-[35px] shrink-0 items-center";
  return (
    <div className="flex h-[27px] shrink-0 items-center bg-[#e9e9e9] pb-0.5 pl-1.5 text-[#444]">
      <input aria-label="字体" className="h-[18px] w-24 border border-[#999] bg-[#ececec]" />
      <button aria-label="字体列表" className="mr-[9px] flex h-[18px] w-4 items-center justify-center border border-l-0 border-[#999] bg-[#f2f2f2]">
        <Icon name="listIcon" className="size-3" />
      </button>
      <div className="flex h-[18px] w-9 border border-[#999]">
        <select aria-label="字号" className="w-[19px] appearance-none bg-[#f2f2f2] pl-[2px] text-xs leading-4 text-[#888]">
          <option>17</option>
        </select>
        <span className="flex w-[15px] items-center justify-center border-l border-[#999]"><Tri dir="down" className="fill-[#666]" /></span>
      </div>
      <div className="ml-1.5 flex text-base leading-5 font-semibold">
        <button className="w-6 font-bold">B</button>
        <button className="w-6 font-serif italic">I</button>
        <button className="w-6 underline">U</button>
        <button className="w-6 line-through">S</button>
      </div>
      <div className={pair}><Tool name="fSize" label="字号" w="w-[22px]" /><Drop /></div>
      <div className={pair}><Tool name="align" label="对齐" w="w-[22px]" /><Drop /></div>
      <Sep className="mr-1" />
      <div className={pair}><Tool name="fColor" label="字体颜色" w="w-[22px]" /><Drop /></div>
      <div className={pair}><Tool name="fill" label="填充颜色" w="w-[22px]" /><Drop color="#000" /></div>
      <div className={pair}><Tool name="pen" label="边框颜色" w="w-[22px]" /><Drop /></div>
      <Sep className="mr-1" />
      <div className={pair}><Tool name="lineW" label="线宽" w="w-[22px]" /><Drop /></div>
      <div className={pair}><Tool name="dash" label="线型" w="w-[22px]" /><Drop /></div>
      <Sep className="mr-1" />
      <div className={pair}><Tool name="order" label="顺序" w="w-[22px]" /><Drop /></div>
      <div className={pair}><Tool name="rotate" label="旋转" w="w-[22px]" /><Drop /></div>
      <div className={pair}><Tool name="alignC" label="居中" w="w-[22px]" /><Drop /></div>
      <div className={pair}><Tool name="distrib" label="分布" w="w-[22px]" /><Drop /></div>
      <div className={pair}><Tool name="sameW" label="等宽" w="w-[22px]" /><Drop /></div>
      <Sep className="mr-1" />
      <Tool name="brush" label="格式刷" />
      <div className={pair}><Tool name="layer" label="层" /><Drop /></div>
      <Tool name="find" label="缩放" />
    </div>
  );
}

const fields = [
  {
    id: "batch", label: "请输入生产批号：", value: "0000", button: "批号确认",
    labelPos: "left-[40px] top-[190px]", fieldPos: "left-[293px] top-[184px]", buttonPos: "left-[619px] top-[180px]",
  },
  {
    id: "drug", label: "请输入药品名称：", value: "0000", button: "药品名确认",
    labelPos: "left-[44px] top-[279px]", fieldPos: "left-[292px] top-[272px]", buttonPos: "left-[618px] top-[268px]",
  },
  {
    id: "time", label: "请输入实验时间：", value: "2002/12/31 10:59:59", button: "试验时间确认",
    labelPos: "left-[47px] top-[376px]", fieldPos: "left-[293px] top-[368px]", buttonPos: "left-[622px] top-[356px]",
  },
];

function Screen() {
  return (
    <div className="relative h-full overflow-hidden bg-[conic-gradient(at_1px_1px,#b4b4b4_270deg,#000_270deg)] bg-size-[8px_8px]">
      <div className="flex h-[60px] flex-col pt-2 pl-[11px]">
        <p className="text-[19px] leading-[18px] font-bold text-[#009999]">SIEMENS</p>
        <p className="mt-[6px] text-sm leading-[18px]">SIMATIC HMI</p>
      </div>
      <div className="h-[3px] bg-[repeating-linear-gradient(135deg,#fff_0_2px,#c4c4c4_2px_3px)]" />
      <div className="h-full w-0.5 bg-[repeating-linear-gradient(135deg,#fff_0_2px,#c4c4c4_2px_3px)]" />
      {fields.map((f) => (
        <div key={f.id}>
          <label htmlFor={f.id} className={`absolute text-[26px] leading-[38px] font-light whitespace-nowrap ${f.labelPos}`}>
            {f.label}
          </label>
          <input
            id={f.id}
            defaultValue={f.value}
            className={`absolute h-[52px] w-[255px] rounded-[3px] border-4 border-[#5c5e6c] bg-white pl-[3px] font-['Liberation_Mono',monospace] text-[17px] font-bold text-[#2a2c48] outline outline-1 -outline-offset-1 outline-[#454656] ${f.fieldPos}`}
          />
          <button
            className={`absolute h-16 w-[170px] rounded-[3px] border-2 border-[#474858] bg-[linear-gradient(#83838f,#62636f_35%,#62636f_70%,#565866)] pb-0.5 text-[17px] font-bold text-white ${f.buttonPos}`}
          >
            {f.button}
          </button>
        </div>
      ))}
    </div>
  );
}

function Crumbs() {
  return (
    <div className="flex h-6 shrink-0 items-center bg-[#2d3550] pr-1 pl-[5px] text-white">
      <nav className="mr-auto flex items-center gap-[9px] pb-0.5 text-sm leading-5 font-medium whitespace-nowrap">
        <a href="#project">TP1200-<span className="text-[15px]">数据记录功能测试</span></a>
        <Tri className="fill-white" />
        <a href="#hmi">HMI_1 [TP1200 Comfort]</a>
        <Tri className="fill-white" />
        <a href="#screens" className="text-[15px]">画面</a>
        <Tri className="fill-white" />
        <a href="#screen1"><span className="text-[15px]">画面</span>_1</a>
      </nav>
      <div className="flex gap-[2px]">
        <WinGlyph kind="min" />
        <WinGlyph kind="restore" />
        <WinGlyph kind="max" />
        <WinGlyph kind="close" />
      </div>
    </div>
  );
}

const inspectorTabs = ["属性", "动画", "事件", "文本"];

function Inspector() {
  return (
    <section className="flex h-[158px] shrink-0 flex-col border-t-[3px] border-[#1a2131] bg-[#e9e9e9]">
      <div className="flex h-6 shrink-0 bg-[#b0b0b0] pl-1.5 text-[15px] font-medium">
        <h2 className="mr-auto leading-[22px] text-white">画面_1 [画面]</h2>
        <div className="flex items-end gap-px">
          <button className="flex h-[21px] w-[75px] items-center gap-1 bg-[#eee] pl-0.5"><Icon name="props" />属性</button>
          <button className="flex h-[21px] w-[81px] items-center gap-1 border border-b-0 border-[#777] bg-[#d4d4d4] pl-0.5 text-[#555]">
            <Icon name="infoDoc" />信息
            <Icon name="infoY" className="ml-1.5 size-3.5" />
          </button>
          <button className="flex h-[21px] w-[75px] items-center gap-1 border border-b-0 border-[#777] bg-[#d4d4d4] pl-0.5 text-[#555]"><Icon name="diag" />诊断</button>
        </div>
        <div className="flex items-center gap-[2px] pr-[3px] pl-[17px]">
          <WinGlyph kind="restore" />
          <WinGlyph kind="rows" />
          <WinGlyph kind="down" />
        </div>
      </div>
      <div className="flex h-7 shrink-0 items-end gap-px border-t-[3px] border-b border-t-[#ececec] border-b-[#777] bg-[#ccc] pl-1.5">
        {inspectorTabs.map((t, i) => (
          <button
            key={t}
            className={`w-[63px] border border-b-0 border-[#777] pr-2.5 pb-1 text-[15px] leading-[18px] font-medium ${
              i === 0 ? "-mb-px h-[22px] bg-[#e9e9e9]" : "h-[21px] bg-[#d2d2d2] text-[#555]"
            }`}
          >
            {t}
          </button>
        ))}
      </div>
      <div className="flex min-h-0 flex-1 bg-[#e9e9e9]">
        <div className="w-[172px] shrink-0 text-xs">
          <div className="flex h-[34px] items-center gap-2 pb-1 pl-1.5 text-[13px]">
            <Icon name="propGo" />
            属性列表
          </div>
          <ul className="bg-[#efefef]">
            <li className="h-[19px] border-b border-[#e2e2e2] pl-4"><span className="inline-block bg-[#c3ccd8] px-0.5 leading-[18px]">常规</span></li>
            <li className="h-[19px] border-b border-[#e2e2e2] pl-[18px] leading-[18px]">层</li>
            <li className="h-[19px] border-b border-[#e2e2e2]" />
            <li className="h-3" />
          </ul>
        </div>
        <div className="mt-[3px] flex w-2 shrink-0 flex-col items-center overflow-hidden border border-[#8a8a8a] bg-[#ddd]">
          <button aria-label="收起" className="mt-5 flex h-6 items-center border-y border-[#888] bg-[#bbb]"><Tri dir="left" className="size-2 fill-black" /></button>
          <button aria-label="展开" className="mt-[10px] flex h-6 items-center border-y border-[#888] bg-[#bbb]"><Tri className="size-2 fill-black" /></button>
        </div>
        <div className="flex min-w-0 flex-1 flex-col overflow-hidden pl-3">
          <div className="flex h-[39px] shrink-0 items-center pr-[11px] text-sm">
            <h3 className="mt-[2px] mr-2">常规</h3>
            <span className="mt-4 h-px flex-1 bg-black" />
          </div>
          <div className="flex min-h-0 flex-1 gap-1.5 pr-2">
            <div className="flex-1 border border-b-0 border-[#b0b0b0] bg-[#ccc] pt-[2px] pl-3.5">
              <h4 className="text-[15px] leading-5 font-medium">样式</h4>
              <div className="mt-[13px] flex h-[18px] items-center pr-[11px] text-xs">
                <label htmlFor="screen-name" className="w-[142px] pr-2 text-right">名称：</label>
                <input id="screen-name" defaultValue="画面_1" className="h-[18px] min-w-0 flex-1 border border-[#8a8a8a] bg-white pl-0.5" />
              </div>
              <div className="mt-[6px] ml-[142px] h-3 w-[125px] border border-[#777] bg-white" />
            </div>
            <div className="flex flex-1 flex-col border border-b-0 border-[#b0b0b0] bg-[#ccc] pt-[2px] pl-3.5">
              <label htmlFor="tooltip" className="text-[15px] leading-5 font-medium">工具提示</label>
              <div className="mt-[13px] mr-[11px] ml-[3px] flex min-h-0 flex-1 border border-b-0 border-[#8a8a8a] bg-[#ccc]">
                <textarea id="tooltip" className="min-w-0 flex-1 resize-none bg-white" />
                <ScrollButton dir="up" className="h-[18px] w-[18px]" />
              </div>
            </div>
          </div>
        </div>
        <div className="mt-[3px] mr-px flex w-[18px] shrink-0 flex-col bg-[#c4c4c4]">
          <ScrollButton dir="up" />
          <div className="mt-px flex h-[27px] items-center justify-center border border-[#8a8a8a] bg-[#e4e4e4]"><Grip /></div>
          <ScrollButton dir="down" className="mt-auto h-[18px] w-full" />
        </div>
      </div>
    </section>
  );
}

function Editor() {
  return (
    <main className="flex min-w-0 flex-1 flex-col bg-[#c4c4c4]">
      <Crumbs />
      <div className="h-7 shrink-0 border-t-[3px] border-b border-t-[#ececec] border-b-[#777] bg-[#ccc]" />
      <FormatBar />
      <div className="flex min-h-0 flex-1">
        <div className="w-[68px] shrink-0 border-l-2 border-[#ddd] bg-[#787878]" />
        <div className="w-[19px] shrink-0 bg-[#6d8599]" />
        <div className="min-w-0 flex-1 bg-black pt-[94px] pl-[60px]">
          <Screen />
        </div>
        <div className="flex w-[17px] shrink-0 flex-col bg-[#c4c4c4]">
          <ScrollButton dir="up" />
          <div className="mt-[42px] flex h-[385px] items-center justify-center border border-[#8a8a8a] bg-[#e4e4e4] outline outline-1 -outline-offset-2 outline-white"><Grip /></div>
          <ScrollButton dir="down" className="mt-auto h-[18px] w-full" />
        </div>
      </div>
      <div className="flex h-[19px] shrink-0 pl-px">
        <ScrollButton dir="left" className="h-full w-[18px]" />
        <div className="flex h-full w-[636px] items-center justify-center border border-[#8a8a8a] bg-[#e4e4e4] outline outline-1 -outline-offset-2 outline-white"><Grip vertical /></div>
        <ScrollButton dir="right" className="ml-auto h-full w-[18px]" />
        <div className="flex w-[278px] items-center bg-[#e9e9e9] pl-1.5">
          <div className="flex h-[18px] w-[156px] border border-[#888] bg-white">
            <select aria-label="缩放" className="flex-1 appearance-none pl-0.5 text-xs leading-4">
              <option>100%</option>
            </select>
            <span className="flex w-4 items-center justify-center border-l border-[#888] bg-[#ddd]"><Tri dir="down" /></span>
          </div>
          <svg viewBox="0 0 68 16" className="ml-[18px] h-4 w-[68px]" aria-hidden="true">
            <path d="M0 5.500h68" stroke="#555" />
            <path d="M1 13h67" stroke="#222" strokeWidth="3" strokeDasharray="1 3" />
            <path d="M20 1h6v6l-3 3-3-3z" fill="#e8e8e8" stroke="#777" />
          </svg>
          <button aria-label="概览" className="ml-auto flex h-full w-[17px] items-center justify-center bg-white">
            <svg viewBox="0 0 14 12" className="h-3 w-3.5"><path d="M3 .5h10v10H3z" fill="#a8b8f0" stroke="#0c1c70" /><path d="M.5 2.500h7v6h-7z" fill="#2a50f0" stroke="#0c1cb0" /></svg>
          </button>
        </div>
      </div>
      <Inspector />
    </main>
  );
}

const palettes = [
  { title: "基本对象", items: ["line", "polyline", "polygon", "ellipse", "circle", "rect", "text", "image"] },
  { title: "元素", items: ["io", "button", "symbolIo", "graphicIo", "dateTime", "bar", "toggle", "library", "slider", "gauge", "clock"] },
  { title: "控件", items: ["alarm", "trend", "user", "web", "recipeView", "dish", "cabinet", "xyTrend", "sysDiag", "media", "camera", "pdf"] },
];

function Toolbox() {
  return (
    <aside className="flex w-[321px] shrink-0 flex-col bg-[#efefef]">
      <div className="flex h-6 shrink-0 items-center gap-[3px] bg-[#b0b0b0] pr-[3px] pl-1.5 text-white">
        <h2 className="mr-auto pb-0.5 text-[15px] font-medium">工具箱</h2>
        <WinGlyph kind="restore" />
        <WinGlyph kind="columns" />
        <WinGlyph kind="right" />
      </div>
      <h3 className="h-7 shrink-0 border-b border-[#777] bg-[linear-gradient(#e8e8e8_7px,#fbfbfb_7px,#e2e2e2)] pt-[3px] pl-1.5 text-[15px] leading-[22px] font-medium">选件</h3>
      <div className="flex h-[25px] shrink-0 items-center bg-[#e9e9e9] pr-[3px] pb-0.5 pl-[3px]">
        <Tool name="cursor" label="选择" />
        <Tool name="stamp" label="图章" />
        <Tool name="devWrench" label="设备" />
        <Tool name="tableIcon" label="表" />
        <div className="ml-1 flex h-[18px] w-[119px] border border-[#888] bg-white">
          <select aria-label="样式" className="flex-1 appearance-none pl-[3px] text-xs leading-4">
            <option>深色默认值</option>
          </select>
          <span className="flex w-4 items-center justify-center border-l border-[#888] bg-[#ddd]"><Tri dir="down" /></span>
        </div>
        <span className="ml-auto"><Tool name="win" label="窗格" w="w-5" /></span>
      </div>
      {palettes.map((p) => (
        <section key={p.title} className="h-[174px] shrink-0 border-t-[3px] border-[#9a9a9a]">
          <SectionHead title={p.title} />
          <div className="grid grid-cols-[repeat(auto-fill,42px)] pt-[2px] pl-1.5">
            {p.items.map((it) => (
              <button key={it} aria-label={it} className="flex h-9 items-center">
                <svg viewBox="0 0 28 28" className="size-7">{big[it]}</svg>
              </button>
            ))}
          </div>
        </section>
      ))}
      <section className="border-t-[3px] border-[#9a9a9a]">
        <SectionHead title="图形" />
        <div className="flex h-[25px] items-center bg-[#e9e9e9] pb-1 pl-[3px]">
          <Tool name="gfxNew" label="新建链接" />
          <Tool name="gfxDel" label="删除链接" />
        </div>
        <ul className="text-[13px] font-medium">
          <li className="flex h-[19px] items-center border-b border-white pl-1">
            <Tri />
            <Icon name="gfxPc" className="ml-[3px] size-4" />
            <span className="ml-px bg-[#c3ccd8] px-0.5 leading-[18px]"><span className="text-xs leading-4">WinCC</span> 图形文件夹</span>
          </li>
          <li className="flex h-[19px] items-center border-b border-white pl-1">
            <Tri className="fill-[#2f60d8]" />
            <Icon name="gfxMan" className="ml-[3px] size-4" />
            <span className="ml-px px-0.5 leading-[18px]">我的图形文件夹</span>
          </li>
          <li className="h-[19px] border-b border-white" />
          <li className="h-[19px] border-b border-white" />
          <li className="h-[19px] border-b border-white" />
        </ul>
        <div className="mt-[5px] flex h-2 justify-center gap-[10px] border-y border-[#8a8a8a] bg-[#ddd]">
          <button aria-label="向上" className="flex w-6 items-center justify-center border-x border-[#888] bg-[#ccc]"><Tri dir="up" /></button>
          <button aria-label="向下" className="flex w-6 items-center justify-center border-x border-[#888] bg-[#ccc]"><Tri dir="down" /></button>
        </div>
      </section>
    </aside>
  );
}

const sideTabs = [
  { icon: "tabTools", text: "工具箱", look: "h-[90px] bg-[#efefef] font-medium text-black" },
  { icon: "tabAnim", text: "动画", look: "h-[74px] bg-[#d6d6d6] text-[#555]" },
  { icon: "tabLayout", text: "布局", look: "h-[74px] bg-[#d6d6d6] text-[#555]" },
  { icon: "tabInstr", text: "指令", look: "h-[74px] bg-[#d6d6d6] text-[#555]" },
  { icon: "tabTask", text: "任务", look: "h-[74px] bg-[#d6d6d6] text-[#555]" },
  { icon: "tabLib", text: "库", look: "h-[58px] bg-[#d6d6d6] text-[#555]" },
];

const openEditors = [
  { icon: "overview", text: "总览" },
  { icon: "screen", text: "根画面" },
  { icon: "screen", text: "画面_1" },
  { icon: "tagTable", text: "变量表_1" },
  { icon: "archive", text: "历史数据" },
];

function StatusBar() {
  return (
    <footer className="flex h-[29px] shrink-0 items-center bg-[#1c1c1c] text-white">
      <button className="flex w-[181px] items-center gap-2 pl-[34px] text-[15px] font-medium">
        <WinGlyph kind="left" />
        <span className="-ml-1 whitespace-nowrap">Portal 视图</span>
      </button>
      <div className="flex gap-[3px] pb-0.5 text-[13px] text-black">
        {openEditors.map((e) => (
          <button
            key={e.text}
            className={`flex h-5 w-[113px] items-center gap-[5px] pl-[2px] leading-[18px] ${e.text === "画面_1" ? "bg-white font-bold" : "bg-[#c4c4c4]"}`}
          >
            <Icon name={e.icon} />
            {e.text}
          </button>
        ))}
      </div>
      <p className="ml-auto flex items-center gap-1.5 pr-[151px] text-[13px]">
        <Icon name="infoB" className="size-3.5" />
        3个对象已被成功打印。
      </p>
    </footer>
  );
}

function TaskTile({ framed = false, label, children }: { framed?: boolean; label: string; children: ReactNode }) {
  return (
    <button
      aria-label={label}
      className={`flex h-[39px] w-[60px] items-center justify-center rounded-[3px] ${
        framed ? "border border-white/60 bg-white/30 shadow-[0_0_0_1px_#1c4f80]" : ""
      }`}
    >
      {children}
    </button>
  );
}

function Taskbar() {
  return (
    <footer className="relative flex h-10 shrink-0 items-center overflow-hidden border-t border-[#a9b4c4] bg-[linear-gradient(#5c6f8ac0,transparent_9px),linear-gradient(90deg,#5fa0c8,#3f93cc_8%,#2f8fd0_35%,#3a9ad4_45%,#2a84c8_55%,#2479c4_62%,#1f6ab4_74%,#154a86_76%,#123a6c)] text-white">
      <svg viewBox="0 0 200 40" className="absolute left-[1240px] h-10 w-[200px]" aria-hidden="true">
        <path d="M78 8q30 10 56 32" fill="none" stroke="#b8d8f8" strokeWidth="12" opacity=".25" />
        <path d="M78 8q30 10 56 32" fill="none" stroke="#b8d8f8" strokeWidth="7" opacity=".7" />
      </svg>
      <button aria-label="开始" className="flex w-[54px] justify-center">
        <svg viewBox="0 0 36 36" className="size-9">
          <circle cx="18" cy="18" r="17.500" fill="url(#orb)" stroke="#1c4468" />
          <path d="M8 11q4-3 8.500-1l-1 7.500q-4-2-8.500 0z" fill="#e8542c" />
          <path d="M18 10.500q5 2 10-.5l-2 8q-4 2-9 0z" fill="#8cc83c" />
          <path d="M7 20q4-2 8.500 0l-1 7.500q-4-2-8.500 0z" fill="#4c9ce8" />
          <path d="M17 20q4 2 9 0L24 28q-4 2-8 0z" fill="#f8cc30" />
        </svg>
      </button>
      <div className="relative ml-1 flex gap-[2px]">
        <TaskTile label="Internet Explorer">
          <svg viewBox="0 0 32 32" className="size-8">
            <path d="M27 19H11q1 5 6 5 4 0 5-2h5q-3 8-11 8Q5 29 5 18 6 7 16 7q12 0 11 12zm-6-4q-1-4-5-4t-5 4z" fill="#68ccf8" stroke="#1c78c0" />
            <path d="M5 28Q-2 30 6 16 16 2 27 2q5 1 2 7 1-5-4-4Q15 6 7 18q-4 7-2 10z" fill="#f8c828" />
          </svg>
        </TaskTile>
        <TaskTile framed label="资源管理器">
          <svg viewBox="0 0 34 32" className="h-8 w-[34px]">
            <path d="M2 5h12l2 3h15v17H2z" fill="#e8c860" stroke="#b89430" />
            <path d="M5 2h6v6H5z" fill="#48a848" />
            <path d="M20 3h8v6h-8z" fill="#e05040" />
            <path d="M2 10h30v17H2z" fill="#f8e8a0" stroke="#c8a848" />
            <path d="M8 31V20h18v11h-4v-7H12v7z" fill="#a8dcf0" stroke="#4c9cc0" />
          </svg>
        </TaskTile>
        <TaskTile label="9J">
          <span className="flex size-8 items-center justify-center rounded-lg bg-[#2090f0]">
            <svg viewBox="0 0 24 24" className="size-6 fill-none stroke-white stroke-[3]"><circle cx="7" cy="8" r="4" /><path d="M11 8q0 8-5 8M4 19q6 4 10-1M15 5h6v11q-2 6-7 4M14 12h4" /></svg>
          </span>
        </TaskTile>
        <TaskTile framed label="浏览器">
          <svg viewBox="0 0 32 32" className="size-8">
            <circle cx="16" cy="17" r="13" fill="#fff" stroke="#58b030" strokeWidth="2" />
            <path d="M24 18H12q1 5 5 5 3 0 5-2h3q-3 6-9 6-8-1-8-10 1-8 9-8 7 1 7 9zm-5-3q-1-3-3-3t-4 3z" fill="#4cb828" />
            <path d="M20 2q8-2 10 2-4-2-8 0z" fill="#4cb828" />
          </svg>
        </TaskTile>
        <TaskTile framed label="TIA Portal V13">
          <span className="size-8 overflow-hidden bg-[#2a2c40] text-left text-base leading-4">
            TIA<br /><span className="text-[#a8acd8]">V13</span>
          </span>
        </TaskTile>
        <TaskTile framed label="画图">
          <svg viewBox="0 0 32 32" className="size-8">
            <path d="M3 19Q3 8 15 6q10 0 12 8-1 5-6 5-3 2-1 6-1 5-8 4-9-3-9-10z" fill="#dcecf8" stroke="#6890b0" />
            <circle cx="9" cy="15" r="2.500" fill="#50b048" /><circle cx="16" cy="11" r="2.500" fill="#f0b030" />
            <circle cx="8" cy="21" r="2.500" fill="#e04838" /><circle cx="22" cy="13" r="2.500" fill="#4080e0" />
            <path d="M28 1l3 2-5 12-9 16-2-1 7-17z" fill="#d88840" stroke="#8c5420" strokeWidth=".6" />
          </svg>
        </TaskTile>
        <TaskTile framed label="查看器">
          <span className="flex size-8 flex-col items-center overflow-hidden bg-[linear-gradient(90deg,#8a98c8,#303650)] text-[15px] leading-4">
            <span>ONHE</span><span className="text-[#c8ccd8]">VIE</span>
          </span>
        </TaskTile>
      </div>
      <div className="relative ml-auto flex items-center">
        <div className="mb-1.5 flex items-center gap-1 text-[13px]">
          <span className="font-bold">英</span>
          <svg viewBox="0 0 16 16" className="size-4"><path d="M8 1q3 8-6 12 5 4 10 0 5-7-4-12z" fill="#fff" /></svg>
          <span className="w-4 text-center">’,</span>
          <svg viewBox="0 0 16 16" className="ml-1 size-4"><path d="M.5 3.500h15v10H.5zM3 6h2m1 0h2m1 0h2m1 0h1M3 8.500h2m1 0h2m1 0h2m1 0h1M4 11h8" fill="none" stroke="#fff" strokeWidth="1.300" /></svg>
          <svg viewBox="0 0 16 16" className="size-4"><circle cx="8" cy="4.500" r="3.500" fill="#8ca4c0" /><path d="M3 15q-1-6 5-6t5 6z" fill="#8ca4c0" /></svg>
          <svg viewBox="0 0 16 16" className="size-4"><path d="M1 13l7-7q-1-5 4-5l-2 3 2 2 3-2q0 5-5 5l-6 6q-3 1-3-2z" fill="#fff" /></svg>
          <svg viewBox="0 0 16 16" className="size-4"><path d="M9 2.500H2.500v11h11V8M7 9l7-7M10 1.500h4.500V6" fill="none" stroke="#fff" strokeWidth="1.500" /></svg>
          <svg viewBox="0 0 16 16" className="ml-1 size-4"><circle cx="8" cy="8" r="7.500" fill="#1c30c8" stroke="#c0c8e8" /><path d="M5.500 6q0-2.500 2.500-2.500T10.500 6Q10.500 7 8 8.500V10M8 11.500v1.500" fill="none" stroke="#fff" strokeWidth="1.600" /></svg>
          <svg viewBox="0 0 10 18" className="ml-1 h-[18px] w-2.5"><path d="M3.500.5h6v4h-6zM.5 2.500h6v4h-6z" fill="none" stroke="#fff" /><path d="M2 14h6l-3 3z" fill="#fff" /></svg>
        </div>
        <div className="ml-2 flex items-center gap-2">
          <Tri dir="up" className="fill-white" />
          <svg viewBox="0 0 16 16" className="size-4" role="img" aria-label="TIA UP">
            <path d="M0 0h16v16H0z" fill="#3a3c50" />
            <text x="0" y="7" fontSize="8" fill="#fff">TIA</text>
            <text x="4" y="15" fontSize="8" fill="#a8b8f0">UP</text>
          </svg>
          <svg viewBox="0 0 16 16" className="size-4"><path d="M8 0l2.500 5.500H16l-4.500 4 2 6L8 12l-5.500 3.500 2-6L0 5.500h5.500z" fill="#f8b820" /><path d="M5 8h6q-3 5-6 0z" fill="#c82818" /></svg>
          <svg viewBox="0 0 16 16" className="size-4"><path d="M2 0v16M3 2h7v6H3z" fill="#fff" stroke="#fff" strokeWidth="1.500" /><circle cx="11" cy="11" r="4.500" fill="#d82020" /><path d="M9 9l4 4M13 9l-4 4" stroke="#fff" strokeWidth="1.400" /></svg>
          <svg viewBox="0 0 16 16" className="size-4"><path d="M2.500 3.500h6v11h-6zM4 2h3M9 5h5v4l-2 2v4M10 2v3M13 2v3" fill="none" stroke="#fff" strokeWidth="1.500" /></svg>
          <svg viewBox="0 0 16 16" className="size-4"><path d="M1.500 12v2M4.500 10v4M7.500 8v6M10.500 5v9M13.500 2v12" stroke="#fff" strokeWidth="2" /></svg>
          <svg viewBox="0 0 16 16" className="size-4"><path d="M1 6h3l4-5v14l-4-5H1z" fill="#fff" /><circle cx="11" cy="11" r="4" fill="none" stroke="#e03020" strokeWidth="1.800" /><path d="M8 8l6 6" stroke="#e03020" strokeWidth="1.800" /></svg>
        </div>
        <time className="ml-3 text-center text-xs leading-[18px]">12:42<br />2015/11/30</time>
        <span className="ml-2 h-10 w-3.5 border border-white/40 bg-white/15" />
      </div>
    </footer>
  );
}

function Gradients() {
  return (
    <svg className="absolute size-0" aria-hidden="true">
      <defs>
        <linearGradient id="gold" x2="1" y2="1"><stop stopColor="#fdeeb0" /><stop offset="1" stopColor="#e8bc58" /></linearGradient>
        <linearGradient id="pale" x2="1" y2="1"><stop stopColor="#fff" /><stop offset="1" stopColor="#c8d4fa" /></linearGradient>
        <linearGradient id="page2" x2="1" y2="1"><stop stopColor="#fff" /><stop offset="1" stopColor="#88a4f0" /></linearGradient>
        <linearGradient id="blue" x2="1" y2="1"><stop stopColor="#7f9cff" /><stop offset="1" stopColor="#1c1ce0" /></linearGradient>
        <linearGradient id="screen" x2="1" y2="1"><stop stopColor="#8fa8e0" /><stop offset="1" stopColor="#f4f8ff" /></linearGradient>
        <linearGradient id="shape" x2="1" y2="1"><stop stopColor="#b0c0ff" /><stop offset="1" stopColor="#4a68ff" /></linearGradient>
        <linearGradient id="metal" x2="1" y2="1"><stop stopColor="#e8e8e8" /><stop offset="1" stopColor="#999" /></linearGradient>
        <linearGradient id="barBlue"><stop stopColor="#8ca4ff" /><stop offset="1" stopColor="#2430d8" /></linearGradient>
        <radialGradient id="orb" cy=".9"><stop stopColor="#40d0f8" /><stop offset="1" stopColor="#285880" /></radialGradient>
      </defs>
    </svg>
  );
}

export default function App() {
  return (
    <div className="flex h-screen flex-col overflow-hidden bg-[#1a2131] font-['Open_Sans','Noto_Sans_CJK_SC',sans-serif] text-black">
      <Gradients />
      <Header />
      <div className="flex min-h-0 flex-1">
        <div className="mr-px flex w-[23px] shrink-0 flex-col bg-[#b0b0b0]">
          <div className="h-[25px] border-b border-white" />
          <div className="flex h-[221px] items-center border-b border-white">
            <button className="rotate-180 text-base leading-5 font-medium text-white [text-orientation:sideways] [writing-mode:vertical-rl]">可视化</button>
          </div>
        </div>
        <ProjectTree />
        <div className="w-[3px] shrink-0" />
        <Editor />
        <div className="w-[3px] shrink-0" />
        <Toolbox />
        <nav className="ml-px flex w-6 shrink-0 flex-col gap-[2px] bg-[#b0b0b0] pt-[30px]">
          {sideTabs.map((t) => (
            <button
              key={t.text}
              className={`flex w-[21px] flex-col items-center gap-1 border border-[#777] pt-[3px] ${t.look}`}
            >
              <Icon name={t.icon} />
              <span className="text-base leading-5 [text-orientation:sideways] [writing-mode:vertical-rl]">{t.text}</span>
            </button>
          ))}
        </nav>
      </div>
      <StatusBar />
      <Taskbar />
    </div>
  );
}
